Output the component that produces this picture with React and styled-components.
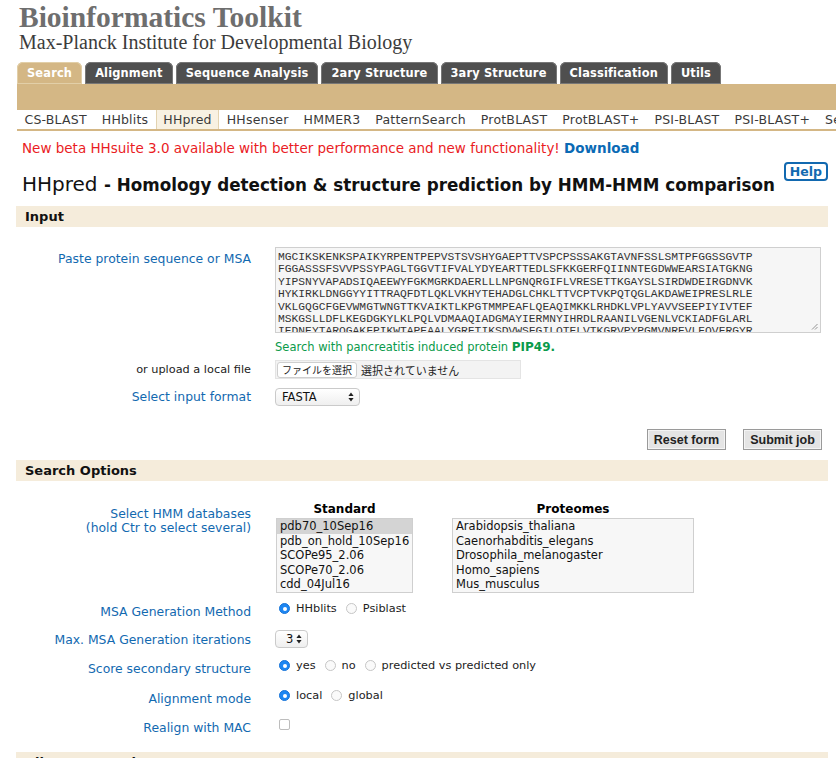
import React from "react";
import styled, { createGlobalStyle } from "styled-components";

const GlobalStyle = createGlobalStyle`
	body {
		margin: 0;
		background: #ffffff;
		font-family: "DejaVu Sans", Verdana, sans-serif;
		color: #000;
	}
`;

const TAN = "#d4b785";
const BEIGE = "#f5ecdb";
const BLUE = "#1269b0";

const Page = styled.div`
	width: 836px;
	overflow: hidden;
`;

const Brand = styled.div`
	padding: 2px 0 0 19px;
	height: 58px;
	box-sizing: border-box;
`;
const BrandTitle = styled.div`
	font-family: "Liberation Serif", "Times New Roman", serif;
	font-weight: bold;
	font-size: 29.5px;
	line-height: 30px;
	color: #6e6e6e;
`;
const BrandSub = styled.div`
	font-family: "Liberation Serif", "Times New Roman", serif;
	font-size: 20px;
	line-height: 21px;
	color: #3c3c3c;
`;

const TabRow = styled.div`
	display: flex;
	gap: 3px;
	padding-left: 17px;
	margin-top: 4px;
	height: 22px;
	align-items: flex-end;
`;
const Tab = styled.div`
	height: 22px;
	padding: 0 10px;
	display: flex;
	align-items: center;
	border-radius: 6px 6px 0 0;
	font-size: 11.4px;
	font-weight: bold;
	color: #fff;
	background: ${(p) => (p.$active ? TAN : "#4f4f4f")};
	box-shadow: inset 0 0 0 1px ${(p) => (p.$active ? "#e2cfa8" : "#777")};
	letter-spacing: 0.17px;
`;
const TanBar = styled.div`
	margin-left: 17px;
	height: 26px;
	background: ${TAN};
`;
const SubTabRow = styled.div`
	display: flex;
	margin-left: 17px;
	height: 19px;
	border-bottom: 2px solid ${TAN};
	white-space: nowrap;
`;
const SubTab = styled.div`
	padding: 0 7.5px;
	font-size: 12.5px;
	line-height: 19px;
	letter-spacing: 0.2px;
	color: #3a3a3a;
	background: ${(p) => (p.$active ? "#f8f1e2" : "transparent")};
	box-shadow: ${(p) => (p.$active ? "inset 1px 0 #e3d3b0, inset -1px 0 #e3d3b0" : "none")};
`;

const Main = styled.div`
	padding: 0 8px 0 16px;
`;
const Notice = styled.div`
	margin-top: 9px;
	padding-left: 6px;
	font-size: 13.5px;
	line-height: 16px;
	color: #ea1c24;
	b {
		color: #0a6ab5;
	}
`;
const TitleRow = styled.div`
	display: flex;
	justify-content: space-between;
	align-items: flex-start;
	padding-left: 6px;
`;
const Title = styled.h1`
	margin: 16px 0 0;
	font-size: 20px;
	font-weight: normal;
	line-height: 24px;
	color: #111;
	b {
		font-size: 16.75px;
	}
`;
const HelpButton = styled.div`
	margin-top: 6px;
	border: 2px solid ${BLUE};
	border-radius: 4px;
	padding: 0 4px;
	font-size: 12.5px;
	font-weight: bold;
	line-height: 15px;
	color: ${BLUE};
`;
const SectionHead = styled.div`
	margin-top: ${(p) => p.$top}px;
	height: 21px;
	background: ${BEIGE};
	padding-left: 9px;
	font-size: 13px;
	font-weight: bold;
	line-height: 21px;
	color: #111;
`;

const FormRow = styled.div`
	display: grid;
	grid-template-columns: 235px 1fr;
	column-gap: 24px;
	margin-top: ${(p) => p.$top || 0}px;
	align-items: ${(p) => (p.$center ? "center" : "start")};
`;
const Label = styled.div`
	text-align: right;
	font-size: ${(p) => (p.$plain ? 11.3 : 12.4)}px;
	line-height: 14px;
	color: ${(p) => (p.$plain ? "#222" : BLUE)};
	padding-top: ${(p) => p.$pad || 0}px;
`;

const SeqBox = styled.div`
	position: relative;
	width: 546px;
	height: 86px;
	box-sizing: border-box;
	border: 1px solid #cfcfcf;
	background: #f6f6f6;
	overflow: hidden;
	padding: 3px 2px;
	font-family: "Liberation Mono", "Courier New", monospace;
	font-size: 11.3px;
	line-height: 12.4px;
	color: #333;
	white-space: pre;
`;
const Grip = styled.svg`
	position: absolute;
	right: 2px;
	bottom: 2px;
`;
const Example = styled.div`
	margin-top: 7px;
	font-size: 11.5px;
	line-height: 14px;
	color: #0a9a4a;
	b {
		font-size: 12px;
	}
`;
const FileInput = styled.div`
	display: flex;
	align-items: center;
	width: 246px;
	height: 19px;
	box-sizing: border-box;
	background: #f3f3f3;
	border: 1px solid #e4e4e4;
	font-family: "Noto Sans CJK JP", "DejaVu Sans", sans-serif;
	font-size: 11px;
	color: #222;
	gap: 4px;
`;
const FileButton = styled.span`
	background: #fff;
	border: 1px solid #cfcfcf;
	border-radius: 3px;
	padding: 0 4px;
	font-size: 10px;
	line-height: 14px;
	margin-left: 1px;
`;
const SelectBox = styled.div`
	display: flex;
	align-items: center;
	justify-content: space-between;
	width: ${(p) => p.$w}px;
	height: 18px;
	box-sizing: border-box;
	border: 1px solid #cacaca;
	border-radius: 4px;
	background: linear-gradient(#ffffff, #efefef);
	padding: 0 5px 0 ${(p) => p.$pl || 6}px;
	font-size: 11.5px;
	color: #111;
`;
const ButtonRow = styled.div`
	display: flex;
	justify-content: flex-end;
	gap: 17px;
	margin-top: 23px;
	padding-right: 6px;
`;
const Button = styled.div`
	width: 79px;
	height: 21px;
	box-sizing: border-box;
	border: 1px solid #9a9a9a;
	box-shadow: inset 0 0 0 1px #f4f4f4;
	background: #e4e4e4;
	display: flex;
	align-items: center;
	justify-content: center;
	font-family: "Liberation Sans", Arial, sans-serif;
	font-size: 12.5px;
	font-weight: bold;
	color: #222;
`;
const Lists = styled.div`
	display: flex;
	gap: 39px;
	padding-left: 1px;
`;
const ListCol = styled.div`
	display: flex;
	flex-direction: column;
	align-items: center;
`;
const ListHead = styled.div`
	font-size: 12px;
	font-weight: bold;
	line-height: 15px;
	margin-bottom: 1px;
`;
const ListBox = styled.div`
	width: ${(p) => p.$w}px;
	height: 75px;
	box-sizing: border-box;
	border: 1px solid #cfcfcf;
	background: #f7f7f7;
`;
const ListItem = styled.div`
	padding-left: 3px;
	font-size: 11.5px;
	line-height: 14.6px;
	color: #111;
	background: ${(p) => (p.$sel ? "#d4d4d4" : "transparent")};
`;
const Options = styled.div`
	display: flex;
	align-items: center;
	font-size: 11.3px;
	color: #222;
	padding-left: 4px;
	height: 15px;
`;
const Radio = styled.span`
	width: 11px;
	height: 11px;
	box-sizing: border-box;
	border-radius: 50%;
	margin-right: 6px;
	flex: none;
	background: ${(p) => (p.$on ? "#1c86f2" : "#fafafa")};
	border: 1px solid ${(p) => (p.$on ? "#1774d8" : "#c6c6c6")};
	display: flex;
	align-items: center;
	justify-content: center;
	&::after {
		content: "";
		width: 4px;
		height: 4px;
		border-radius: 50%;
		background: ${(p) => (p.$on ? "#fff" : "transparent")};
	}
`;
const OptText = styled.span`
	margin-right: 9px;
`;
const Check = styled.span`
	width: 11px;
	height: 11px;
	box-sizing: border-box;
	border: 1px solid #bdbdbd;
	border-radius: 2px;
	background: #fff;
	display: block;
`;

const SEQUENCE = [
	"MGCIKSKENKSPAIKYRPENTPEPVSTSVSHYGAEPTTVSPCPSSSAKGTAVNFSSLSMTPFGGSSGVTP",
	"FGGASSSFSVVPSSYPAGLTGGVTIFVALYDYEARTTEDLSFKKGERFQIINNTEGDWWEARSIATGKNG",
	"YIPSNYVAPADSIQAEEWYFGKMGRKDAERLLLNPGNQRGIFLVRESETTKGAYSLSIRDWDEIRGDNVK",
	"HYKIRKLDNGGYYITTRAQFDTLQKLVKHYTEHADGLCHKLTTVCPTVKPQTQGLAKDAWEIPRESLRLE",
	"VKLGQGCFGEVWMGTWNGTTKVAIKTLKPGTMMPEAFLQEAQIMKKLRHDKLVPLYAVVSEEPIYIVTEF",
	"MSKGSLLDFLKEGDGKYLKLPQLVDMAAQIADGMAYIERMNYIHRDLRAANILVGENLVCKIADFGLARL",
	"IEDNEYTARQGAKFPIKWTAPEAALYGRFTIKSDVWSFGILQTELVTKGRVPYPGMVNREVLEQVERGYR",
];

const TABS = ["Search", "Alignment", "Sequence Analysis", "2ary Structure", "3ary Structure", "Classification", "Utils"];
const SUBTABS = ["CS-BLAST", "HHblits", "HHpred", "HHsenser", "HMMER3", "PatternSearch", "ProtBLAST", "ProtBLAST+", "PSI-BLAST", "PSI-BLAST+", "SequenceSearch"];
const STANDARD = ["pdb70_10Sep16", "pdb_on_hold_10Sep16", "SCOPe95_2.06", "SCOPe70_2.06", "cdd_04Jul16"];
const PROTEOMES = ["Arabidopsis_thaliana", "Caenorhabditis_elegans", "Drosophila_melanogaster", "Homo_sapiens", "Mus_musculus"];

const Arrows = () => (
	<svg width="6" height="10" viewBox="0 0 6 10">
		<path d="M3 0.5 L5.6 4 L0.4 4 Z M3 9.5 L5.6 6 L0.4 6 Z" fill="#222" />
	</svg>
);

const RadioGroup = ({ items, selected }) => (
	<Options>
		{items.map((it, i) => (
			<React.Fragment key={it}>
				<Radio $on={i === selected} />
				<OptText>{it}</OptText>
			</React.Fragment>
		))}
	</Options>
);

export default function App() {
	return (
		<Page>
			<GlobalStyle />
			<Brand>
				<BrandTitle>Bioinformatics Toolkit</BrandTitle>
				<BrandSub>Max-Planck Institute for Developmental Biology</BrandSub>
			</Brand>
			<TabRow>
				{TABS.map((t) => (
					<Tab key={t} $active={t === "Search"}>
						{t}
					</Tab>
				))}
			</TabRow>
			<TanBar />
			<SubTabRow>
				{SUBTABS.map((t) => (
					<SubTab key={t} $active={t === "HHpred"}>
						{t}
					</SubTab>
				))}
			</SubTabRow>
			<Main>
				<Notice>
					New beta HHsuite 3.0 available with better performance and new functionality! <b>Download</b>
				</Notice>
				<TitleRow>
					<Title>
						HHpred <b>- Homology detection &amp; structure prediction by HMM-HMM comparison</b>
					</Title>
					<HelpButton>Help</HelpButton>
				</TitleRow>

				<SectionHead $top={9}>Input</SectionHead>
				<FormRow $top={20}>
					<Label $pad={5}>Paste protein sequence or MSA</Label>
					<div>
						<SeqBox>
							{SEQUENCE.join("\n")}
							<Grip width="7" height="7" viewBox="0 0 7 7">
								<path d="M6.5 1 L1 6.5 M6.5 4 L4 6.5" stroke="#888" strokeWidth="0.9" />
							</Grip>
						</SeqBox>
						<Example>
							Search with pancreatitis induced protein <b>PIP49.</b>
						</Example>
					</div>
				</FormRow>
				<FormRow $top={6} $center>
					<Label $plain>or upload a local file</Label>
					<FileInput>
						<FileButton>ファイルを選択</FileButton>
						選択されていません
					</FileInput>
				</FormRow>
				<FormRow $top={9} $center>
					<Label>Select input format</Label>
					<SelectBox $w={85}>
						FASTA
						<Arrows />
					</SelectBox>
				</FormRow>
				<ButtonRow>
					<Button>Reset form</Button>
					<Button>Submit job</Button>
				</ButtonRow>

				<SectionHead $top={10}>Search Options</SectionHead>
				<FormRow $top={21}>
					<Label $pad={5}>
						Select HMM databases
						<br />
						(hold Ctr to select several)
					</Label>
					<Lists>
						<ListCol>
							<ListHead>Standard</ListHead>
							<ListBox $w={137}>
								{STANDARD.map((s, i) => (
									<ListItem key={s} $sel={i === 0}>
										{s}
									</ListItem>
								))}
							</ListBox>
						</ListCol>
						<ListCol>
							<ListHead>Proteomes</ListHead>
							<ListBox $w={242}>
								{PROTEOMES.map((s) => (
									<ListItem key={s}>{s}</ListItem>
								))}
							</ListBox>
						</ListCol>
					</Lists>
				</FormRow>
				<FormRow $top={8}>
					<Label $pad={4}>MSA Generation Method</Label>
					<RadioGroup items={["HHblits", "Psiblast"]} selected={0} />
				</FormRow>
				<FormRow $top={11}>
					<Label $pad={3}>Max. MSA Generation iterations</Label>
					<SelectBox $w={33} $pl={10}>
						3
						<Arrows />
					</SelectBox>
				</FormRow>
				<FormRow $top={10}>
					<Label $pad={4}>Score secondary structure</Label>
					<RadioGroup items={["yes", "no", "predicted vs predicted only"]} selected={0} />
				</FormRow>
				<FormRow $top={12}>
					<Label $pad={4}>Alignment mode</Label>
					<RadioGroup items={["local", "global"]} selected={0} />
				</FormRow>
				<FormRow $top={11}>
					<Label $pad={4}>Realign with MAC</Label>
					<Options>
						<Check />
					</Options>
				</FormRow>
				<SectionHead $top={17}>Alignment Options</SectionHead>
			</Main>
		</Page>
	);
}
